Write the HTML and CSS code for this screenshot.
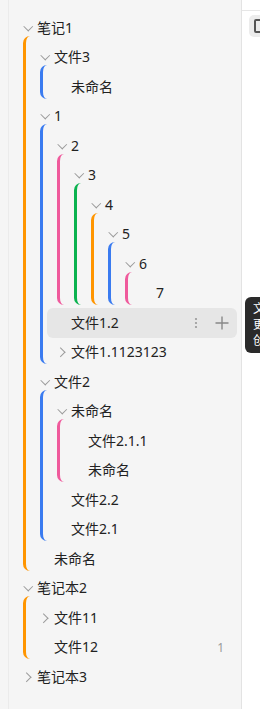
FILE: index.html
```html
<!DOCTYPE html>
<html lang="zh-CN">
<head>
<meta charset="UTF-8" />
<meta name="viewport" content="width=device-width, initial-scale=1" />
<title>笔记</title>
<link rel="stylesheet" href="styles.css">
</head>
<body>

<div class="app">
  <aside class="sidebar">
    <div class="tree">

      <div class="node">
        <div class="row"><span class="arrow down"></span><span class="label">笔记1</span></div>
        <div class="children orange">

          <div class="node">
            <div class="row"><span class="arrow down"></span><span class="label">文件3</span></div>
            <div class="children blue">
              <div class="node"><div class="row"><span class="arrow"></span><span class="label">未命名</span></div></div>
            </div>
          </div>

          <div class="node">
            <div class="row"><span class="arrow down"></span><span class="label">1</span></div>
            <div class="children blue">
              <div class="node">
                <div class="row"><span class="arrow down"></span><span class="label">2</span></div>
                <div class="children pink">
                  <div class="node">
                    <div class="row"><span class="arrow down"></span><span class="label">3</span></div>
                    <div class="children green">
                      <div class="node">
                        <div class="row"><span class="arrow down"></span><span class="label">4</span></div>
                        <div class="children orange">
                          <div class="node">
                            <div class="row"><span class="arrow down"></span><span class="label">5</span></div>
                            <div class="children blue">
                              <div class="node">
                                <div class="row"><span class="arrow down"></span><span class="label">6</span></div>
                                <div class="children pink">
                                  <div class="node"><div class="row"><span class="arrow"></span><span class="label">7</span></div></div>
                                </div>
                              </div>
                            </div>
                          </div>
                        </div>
                      </div>
                    </div>
                  </div>
                </div>
              </div>
              <div class="node">
                <div class="row active">
                  <span class="arrow"></span><span class="label">文件1.2</span>
                  <span class="actions">
                    <svg class="more" width="4" height="12" viewBox="0 0 4 12"><circle cx="2" cy="2" r="1.1"/><circle cx="2" cy="6" r="1.1"/><circle cx="2" cy="10" r="1.1"/></svg>
                    <svg class="plus" width="14" height="14" viewBox="0 0 14 14"><path d="M7 0.5v13M0.5 7h13"/></svg>
                  </span>
                </div>
              </div>
              <div class="node"><div class="row"><span class="arrow right"></span><span class="label">文件1.1123123</span></div></div>
            </div>
          </div>

          <div class="node">
            <div class="row"><span class="arrow down"></span><span class="label">文件2</span></div>
            <div class="children blue">
              <div class="node">
                <div class="row"><span class="arrow down"></span><span class="label">未命名</span></div>
                <div class="children pink">
                  <div class="node"><div class="row"><span class="arrow"></span><span class="label">文件2.1.1</span></div></div>
                  <div class="node"><div class="row"><span class="arrow"></span><span class="label">未命名</span></div></div>
                </div>
              </div>
              <div class="node"><div class="row"><span class="arrow"></span><span class="label">文件2.2</span></div></div>
              <div class="node"><div class="row"><span class="arrow"></span><span class="label">文件2.1</span></div></div>
            </div>
          </div>

          <div class="node"><div class="row"><span class="arrow"></span><span class="label">未命名</span></div></div>
        </div>
      </div>

      <div class="node">
        <div class="row"><span class="arrow down"></span><span class="label">笔记本2</span></div>
        <div class="children orange">
          <div class="node"><div class="row"><span class="arrow right"></span><span class="label">文件11</span></div></div>
          <div class="node"><div class="row"><span class="arrow"></span><span class="label">文件12</span><span class="count">1</span></div></div>
        </div>
      </div>

      <div class="node">
        <div class="row"><span class="arrow right"></span><span class="label">笔记本3</span></div>
      </div>

    </div>
  </aside>

  <main class="main">
    <div class="toolbar">
      <button class="tool-btn"><span class="tool-icon"></span></button>
    </div>
    <div class="tooltip">
      <div>文件1.2</div>
      <div>更新于 2024-05-12</div>
      <div>创建于 2024-05-10</div>
    </div>
  </main>
</div>

</body>
</html>
```

FILE: styles.css
```css
* {
  box-sizing: border-box;
}
html, body {
  margin: 0;
  height: 100%;
  overflow: hidden;
}
body {
  font-family: 'Noto Sans', 'Noto Sans CJK SC', sans-serif;
  font-size: 14px;
  color: #222;
  background: #fff;
}
.app {
  display: flex;
  height: 100vh;
}
.sidebar {
  width: 242px;
  flex-shrink: 0;
  background: #f5f5f5;
  border-right: 1px solid #e3e3e3;
  padding-left: 8px;
}
.tree {
  height: 100%;
  border-left: 1px solid #ebebeb;
  padding: 13px 4px 0 4px;
}
.row {
  display: flex;
  align-items: center;
  height: 29.5px;
  padding-left: 10px;
  padding-right: 8px;
  border-radius: 6px;
  white-space: nowrap;
}
.row.active {
  background: #e6e6e6;
}
.arrow {
  width: 14px;
  height: 14px;
  flex-shrink: 0;
  position: relative;
}
.arrow.down::before,
.arrow.right::before {
  content: '';
  position: absolute;
  width: 5.5px;
  height: 5.5px;
  border-right: 1.6px solid #9a9a9a;
  border-bottom: 1.6px solid #9a9a9a;
}
.arrow.down::before {
  left: 2px;
  top: 2px;
  transform: rotate(45deg);
}
.arrow.right::before {
  left: 0;
  top: 4px;
  transform: rotate(-45deg);
}
.label {
  line-height: 1;
}
.actions {
  margin-left: auto;
  display: flex;
  align-items: center;
  gap: 17px;
}
.more {
  fill: #999;
}
.plus {
  stroke: #888;
  stroke-width: 1.4;
}
.count {
  margin-left: auto;
  padding-right: 5px;
  font-size: 12px;
  color: #999;
}
.children {
  position: relative;
  margin-left: 10px;
  padding-left: 7px;
}
.children::before {
  content: '';
  position: absolute;
  left: 0;
  top: -7px;
  bottom: 3px;
  width: 10px;
  border-left: 3px solid;
  border-radius: 7px 0 0 7px;
}
.children.orange::before { border-color: #ff9500; }
.children.blue::before { border-color: #3a7bf0; }
.children.pink::before { border-color: #ef5a9c; }
.children.green::before { border-color: #0bb24f; }

.main {
  flex: 1;
  position: relative;
}
.toolbar {
  margin-top: 10px;
  border-top: 1px solid #e6e6e6;
  padding: 4px 0 0 7px;
}
.tool-btn {
  display: flex;
  align-items: center;
  width: 24px;
  height: 22px;
  padding: 0 0 0 5px;
  border: none;
  border-radius: 5px;
  background: #ececec;
}
.tool-icon {
  width: 12px;
  height: 14px;
  border: 2px solid #555;
  border-radius: 2px;
}
.tooltip {
  position: absolute;
  left: 3px;
  top: 297px;
  width: 120px;
  padding: 4px 8px;
  background: #2b2b2b;
  color: #fff;
  font-size: 12px;
  line-height: 16px;
  border-radius: 6px;
  white-space: nowrap;
}
```
